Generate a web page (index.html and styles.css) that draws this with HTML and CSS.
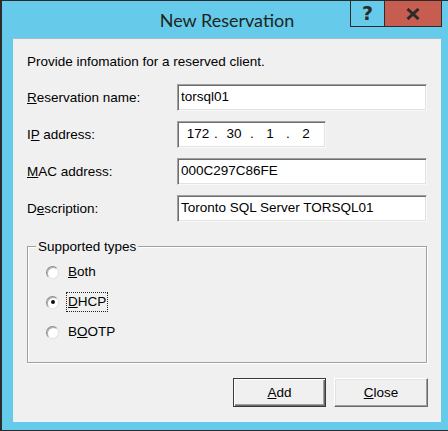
FILE: index.html
```html
<!DOCTYPE html>
<html>
<head>
<meta charset="utf-8">
<link rel="stylesheet" href="styles.css">
</head>
<body>
<div class="window">
  <div class="titlebar">
    <div class="title">New Reservation</div>
    <div class="caption-btns">
      <div class="cbtn help">?</div>
      <div class="cbtn close">
        <svg width="14" height="12" viewBox="0 0 14 12"><path d="M1.5 1 L12.5 11 M12.5 1 L1.5 11" stroke="#2b2b2b" stroke-width="3" fill="none"/></svg>
      </div>
    </div>
  </div>
  <div class="frame">
    <div class="client">
      <p class="intro">Provide infomation for a reserved client.</p>
      <div class="form">
        <div class="lbl"><u>R</u>eservation name:</div>
        <div class="field wide">torsql01</div>
        <div class="lbl">I<u>P</u> address:</div>
        <div class="field ip"><span class="oct">172</span><span class="dot">.</span><span class="oct">30</span><span class="dot">.</span><span class="oct">1</span><span class="dot">.</span><span class="oct">2</span></div>
        <div class="lbl"><u>M</u>AC address:</div>
        <div class="field wide">000C297C86FE</div>
        <div class="lbl">D<u>e</u>scription:</div>
        <div class="field wide">Toronto SQL Server TORSQL01</div>
      </div>
      <div class="group">
        <span class="legend">Supported types</span>
        <div class="radio-row"><span class="radio"></span><span class="rlabel"><u>B</u>oth</span></div>
        <div class="radio-row"><span class="radio checked"></span><span class="rlabel focus"><u>D</u>HCP</span></div>
        <div class="radio-row"><span class="radio"></span><span class="rlabel">B<u>O</u>OTP</span></div>
      </div>
      <div class="buttons">
        <button class="btn default"><u>A</u>dd</button>
        <button class="btn"><u>C</u>lose</button>
      </div>
    </div>
  </div>
</div>
</body>
</html>
```
FILE: styles.css
```css
html, body {
  margin: 0;
  padding: 0;
  overflow: hidden;
  background: #ffffff;
}
.window {
  width: 454px;
  height: 431px;
  box-sizing: border-box;
  background: #66cbea;
  border-left: 2px solid #2b2b2b;
  border-right: 2px solid #2b2b2b;
  border-top: 1px solid #2b2b2b;
  border-bottom: 1px solid #2b2b2b;
  display: flex;
  flex-direction: column;
}
.titlebar {
  height: 37px;
  display: grid;
  grid-template-columns: 1fr;
  grid-template-rows: 37px;
}
.title {
  grid-area: 1 / 1;
  text-align: center;
  font-family: Lato, "Noto Sans", sans-serif;
  font-size: 18px;
  line-height: 22px;
  padding-top: 8px;
  color: #1e2420;
}
.caption-btns {
  grid-area: 1 / 1;
  justify-self: end;
  align-self: start;
  margin-top: -1px;
  margin-right: 10px;
  display: flex;
}
.cbtn {
  height: 27px;
  box-sizing: border-box;
  border: 1px solid #2b2b2b;
  display: flex;
  align-items: center;
  justify-content: center;
}
.help {
  width: 35px;
  font-family: "DejaVu Sans", sans-serif;
  font-weight: bold;
  font-size: 19px;
  color: #2b2b2b;
  line-height: 1;
}
.close {
  width: 57px;
  border-left: none;
  background: #c75c50;
}
.frame {
  flex: 1;
  padding: 0 11px 8px 11px;
  display: flex;
}
.client {
  flex: 1;
  background: #f0f0f0;
  border-top: 1px solid #9dbcd2;
  padding: 15px 14px 15px 14px;
  font-family: "Liberation Sans", Arial, sans-serif;
  font-size: 13.5px;
  color: #000;
  display: flex;
  flex-direction: column;
}
.intro {
  margin: 0;
  line-height: 16px;
}
.form {
  margin-top: 14px;
  display: grid;
  grid-template-columns: 150px 250px;
  grid-auto-rows: 27px;
  row-gap: 10px;
  align-items: center;
}
.lbl {
  line-height: 16px;
  padding-top: 1px;
}
.field {
  height: 27px;
  box-sizing: border-box;
  background: #fff;
  border: 1px solid;
  border-color: #a0a0a0 #f8f8f8 #f8f8f8 #a0a0a0;
  box-shadow: inset 1px 1px 0 #6e6e6e, inset -1px -1px 0 #e3e3e3;
  padding-left: 3px;
  line-height: 24px;
  white-space: nowrap;
}
.field.wide {
  width: 250px;
}
.field.ip {
  width: 149px;
  display: flex;
  padding-left: 5px;
}
.oct {
  width: 30px;
  text-align: center;
}
.dot {
  width: 6px;
  text-align: center;
}
.group {
  margin-top: 24px;
  height: 117px;
  box-sizing: border-box;
  border: 1px solid #a0a0a0;
  box-shadow: inset 1px 1px 0 #fff, 1px 1px 0 #fff;
  padding: 0 0 0 18px;
  display: flex;
  flex-direction: column;
  align-items: flex-start;
}
.legend {
  margin-top: -8px;
  margin-left: -10px;
  padding: 0 2px;
  background: #f0f0f0;
  line-height: 16px;
}
.radio-row {
  height: 30px;
  display: flex;
  align-items: center;
}
.radio-row:first-of-type {
  margin-top: 2px;
}
.legend + .radio-row {
  margin-top: 2px;
}
.radio {
  width: 13px;
  height: 13px;
  box-sizing: border-box;
  border-radius: 50%;
  background: #fff;
  border: 1px solid;
  border-color: #8a8a8a #e0e0e0 #e0e0e0 #8a8a8a;
  box-shadow: inset 1px 1px 0 #b0b0b0;
  display: flex;
  align-items: center;
  justify-content: center;
}
.radio.checked::after {
  content: "";
  width: 4px;
  height: 4px;
  border-radius: 50%;
  background: #111;
}
.rlabel {
  margin-left: 7px;
  padding: 1px 1px;
  border: 1px dotted transparent;
  line-height: 16px;
}
.rlabel.focus {
  border-color: #222;
}
.buttons {
  margin-top: 15px;
  display: flex;
  justify-content: flex-end;
  gap: 8px;
  margin-right: -1px;
}
.btn {
  width: 94px;
  height: 29px;
  box-sizing: border-box;
  font-family: "Liberation Sans", Arial, sans-serif;
  font-size: 13.5px;
  color: #000;
  background: #f0f0f0;
  border: 1px solid;
  border-color: #ffffff #6a6a6a #6a6a6a #ffffff;
  box-shadow: inset -1px -1px 0 #a0a0a0, inset 1px 1px 0 #e3e3e3;
  padding: 0;
  line-height: 16px;
}
.btn.default {
  width: 93px;
  border: 1px solid #3a3a3a;
  box-shadow: inset 1px 1px 0 #ffffff, inset -1px -1px 0 #6a6a6a, inset -2px -2px 0 #a0a0a0;
}
```
